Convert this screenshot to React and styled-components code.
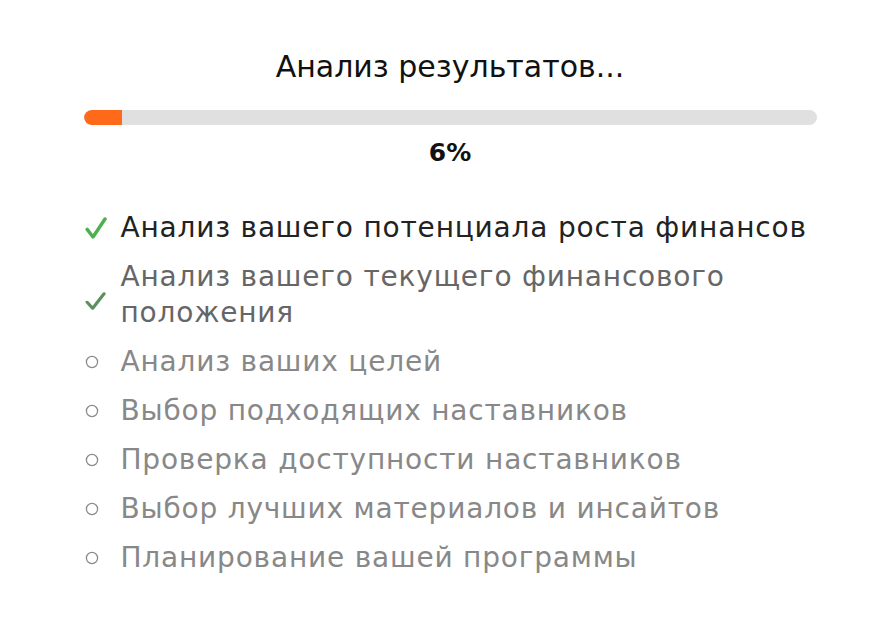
import styled, { createGlobalStyle } from "styled-components";

const GlobalStyle = createGlobalStyle`
  body {
    margin: 0;
    background: #ffffff;
    font-family: "DejaVu Sans", Verdana, sans-serif;
  }
`;

const progress = 6;

const steps = [
  { label: "Анализ вашего потенциала роста финансов", state: "done" },
  { label: "Анализ вашего текущего финансового положения", state: "fading" },
  { label: "Анализ ваших целей", state: "pending" },
  { label: "Выбор подходящих наставников", state: "pending" },
  { label: "Проверка доступности наставников", state: "pending" },
  { label: "Выбор лучших материалов и инсайтов", state: "pending" },
  { label: "Планирование вашей программы", state: "pending" },
];

function StepIcon({ state }) {
  if (state === "pending") {
    return (
      <svg width="14" height="14" viewBox="0 0 14 14">
        <circle cx="7" cy="7" r="5.6" fill="none" stroke="currentColor" strokeWidth="1.3" />
      </svg>
    );
  }
  const small = state === "fading";
  return (
    <svg
      width={small ? 21 : 22}
      height={small ? 18 : 22}
      viewBox="0 0 22 22"
      preserveAspectRatio="none"
    >
      <path
        d="M2.2 12.4 L8 20 L20 2"
        fill="none"
        stroke="currentColor"
        strokeWidth="3.4"
        strokeLinecap="round"
        strokeLinejoin="round"
      />
    </svg>
  );
}

export default function App() {
  return (
    <>
      <GlobalStyle />
      <StyledPage>
        <StyledPanel>
          <StyledTitle>Анализ результатов...</StyledTitle>
          <StyledTrack>
            <StyledFill style={{ width: `${progress * 0.87}%` }} />
          </StyledTrack>
          <StyledPercent>{progress}%</StyledPercent>

          <StyledSteps>
            {steps.map((step) => (
              <StyledStep key={step.label} $state={step.state}>
                <StyledMarker $state={step.state}>
                  <StepIcon state={step.state} />
                </StyledMarker>
                <span>{step.label}</span>
              </StyledStep>
            ))}
          </StyledSteps>
        </StyledPanel>
      </StyledPage>
    </>
  );
}

const StyledPage = styled.main`
  padding: 46px 0 40px 12px;
`;

const StyledPanel = styled.section`
  width: 733px;
  margin: 0 auto;
  display: flex;
  flex-direction: column;
`;

const StyledTitle = styled.h1`
  margin: 0;
  text-align: center;
  font-size: 30px;
  font-weight: 400;
  line-height: 42px;
  color: #111111;
`;

const StyledTrack = styled.div`
  margin-top: 22px;
  height: 15px;
  border-radius: 8px;
  background: #e0e0e0;
  overflow: hidden;
`;

const StyledFill = styled.div`
  height: 100%;
  background: #ff6a1a;
  border-radius: 8px 0 0 8px;
`;

const StyledPercent = styled.div`
  margin-top: 12px;
  text-align: center;
  font-size: 25px;
  line-height: 32px;
  font-weight: 700;
  color: #111111;
`;

const StyledSteps = styled.ul`
  list-style: none;
  margin: 41px 0 0;
  padding: 0;
  display: flex;
  flex-direction: column;
  gap: 13px;
`;

const stepColors = {
  done: "#222222",
  fading: "#666666",
  pending: "#888888",
};

const markerColors = {
  done: "#4caf50",
  fading: "#5e8f5e",
  pending: "#8a8a8a",
};

const StyledStep = styled.li`
  display: flex;
  align-items: center;
  font-size: 28px;
  line-height: 36px;
  letter-spacing: 0.8px;
  color: ${({ $state }) => stepColors[$state]};
`;

const StyledMarker = styled.span`
  flex: 0 0 36px;
  display: flex;
  align-items: center;
  padding-left: 1px;
  margin-top: ${({ $state }) => ($state === "fading" ? "12px" : "0")};
  color: ${({ $state }) => markerColors[$state]};
`;
